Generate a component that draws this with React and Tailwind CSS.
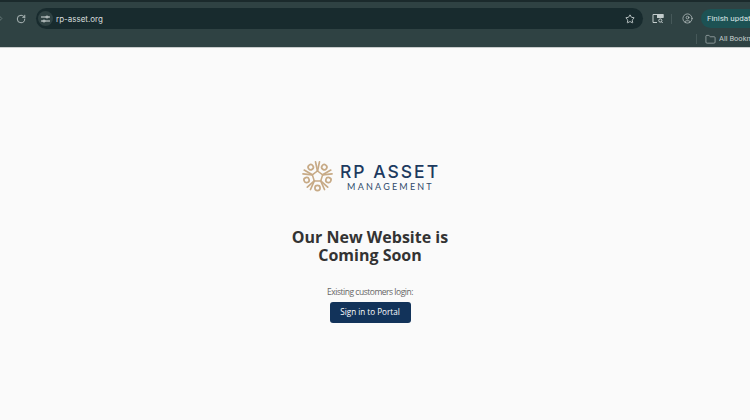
import React from "react";
import { RotateCw, Star, CircleUser, Folder, ChevronRight } from "lucide-react";

const Logo = () => (
  <svg width="33" height="33" viewBox="0 0 33 33" fill="none" stroke="#c7aa86" strokeWidth="1.7" strokeLinecap="round">
    <polygon points="16.5,11 21.7,14.8 19.7,20.9 13.3,20.9 11.3,14.8" strokeWidth="1.5" />
    {[0, 72, 144, 216, 288].map((a) => (
      <g key={a} transform={`rotate(${a} 16.5 16.5)`}>
        <circle cx="16.5" cy="28" r="2.6" />
        <path d="M13.3 20.9 L9.5 29.5" />
        <path d="M19.7 20.9 L23.5 29.5" />
      </g>
    ))}
  </svg>
);

const App = () => {
  return (
    <div className="w-[750px] h-[420px] overflow-hidden flex flex-col bg-[#fafafa] font-['Open_Sans',sans-serif]">
      {/* Browser chrome */}
      <div className="h-[48px] shrink-0 bg-[#2f4243] border-b border-[#c9cccc] flex flex-col">
        <div className="h-[2px] bg-[#1b2a2c]" />
        <div className="h-[25px] mt-[4px] flex items-center">
          <ChevronRight size={11} className="text-[#6f8080] -ml-[5px] shrink-0" />
          <RotateCw size={10} strokeWidth={2} className="text-[#c3cccc] ml-[10px] shrink-0" />
          <div className="ml-[10px] w-[607px] h-[21px] rounded-full bg-[#182b2e] flex items-center shrink-0">
            <div className="ml-[2px] w-[15px] h-[15px] rounded-full bg-[#2f4243] flex items-center justify-center">
              <svg width="9" height="8" viewBox="0 0 9 8" stroke="#d5dcdc" strokeWidth="1" fill="none">
                <path d="M0 2h5M7 2h2M0 6h2M4 6h5" />
                <circle cx="6" cy="2" r="1" />
                <circle cx="3" cy="6" r="1" />
              </svg>
            </div>
            <span className="ml-[3px] text-[8px] text-[#d6dddd] font-['Inter',sans-serif]">rp-asset.org</span>
            <Star size={10} strokeWidth={2} className="ml-auto mr-[8px] text-[#d6dddd]" />
          </div>
          <svg width="12" height="11" viewBox="0 0 12 11" fill="none" stroke="#c3cccc" strokeWidth="1" className="ml-[9px] shrink-0">
            <path d="M5 9.5H1V1.5h10v3" />
            <rect x="5.5" y="1.5" width="5.5" height="3" fill="#c3cccc" />
            <circle cx="8.3" cy="7.5" r="1.6" />
            <path d="M9.5 8.8l1.2 1.2" />
          </svg>
          <div className="ml-[7px] w-px h-[10px] bg-[#465859] shrink-0" />
          <CircleUser size={11} strokeWidth={1.5} className="ml-[10px] text-[#c3cccc] shrink-0" />
          <div className="ml-[8px] h-[19px] w-[60px] rounded-l-full bg-[#1d5254] flex items-center pl-[6px] shrink-0">
            <span className="text-[8px] whitespace-nowrap text-[#d9e4e4] font-['Roboto',sans-serif]">Finish update</span>
          </div>
        </div>
        <div className="flex-1 flex items-center justify-end">
          <div className="w-px h-[10px] bg-[#465859]" />
          <Folder size={11} strokeWidth={1.3} className="ml-[8px] text-[#c3cccc]" />
          <span className="ml-[3px] w-[31px] overflow-hidden whitespace-nowrap text-[7.5px] text-[#c3cccc] font-['Roboto',sans-serif]">All Bookmarks</span>
        </div>
      </div>

      {/* Page */}
      <div className="flex-1 flex flex-col items-center pt-[112px] pr-[10px]">
        <div className="flex items-center gap-[6px] ml-[1px]">
          <Logo />
          <div className="flex flex-col items-center">
            <span className="text-[17.5px] leading-[20px] font-medium tracking-[2px] text-[#1d3a5f] font-['Inter',sans-serif]">RP ASSET</span>
            <span className="ml-[1px] text-[9px] leading-[10px] tracking-[2.2px] text-[#2f4a6b] font-['Lato',sans-serif]">MANAGEMENT</span>
          </div>
        </div>
        <h1 className="mt-[35px] text-center text-[16px] leading-[18px] font-bold text-[#333333]">
          Our New Website is
          <br />
          Coming Soon
        </h1>
        <p className="mt-[22px] text-[8.5px] tracking-[-0.48px] leading-[12px] text-[#666666]">Existing customers login:</p>
        <button className="mt-[4px] w-[81px] h-[21px] rounded-[3px] bg-[#12335a] text-[8.1px] text-white">Sign in to Portal</button>
      </div>
    </div>
  );
};

export default App;
